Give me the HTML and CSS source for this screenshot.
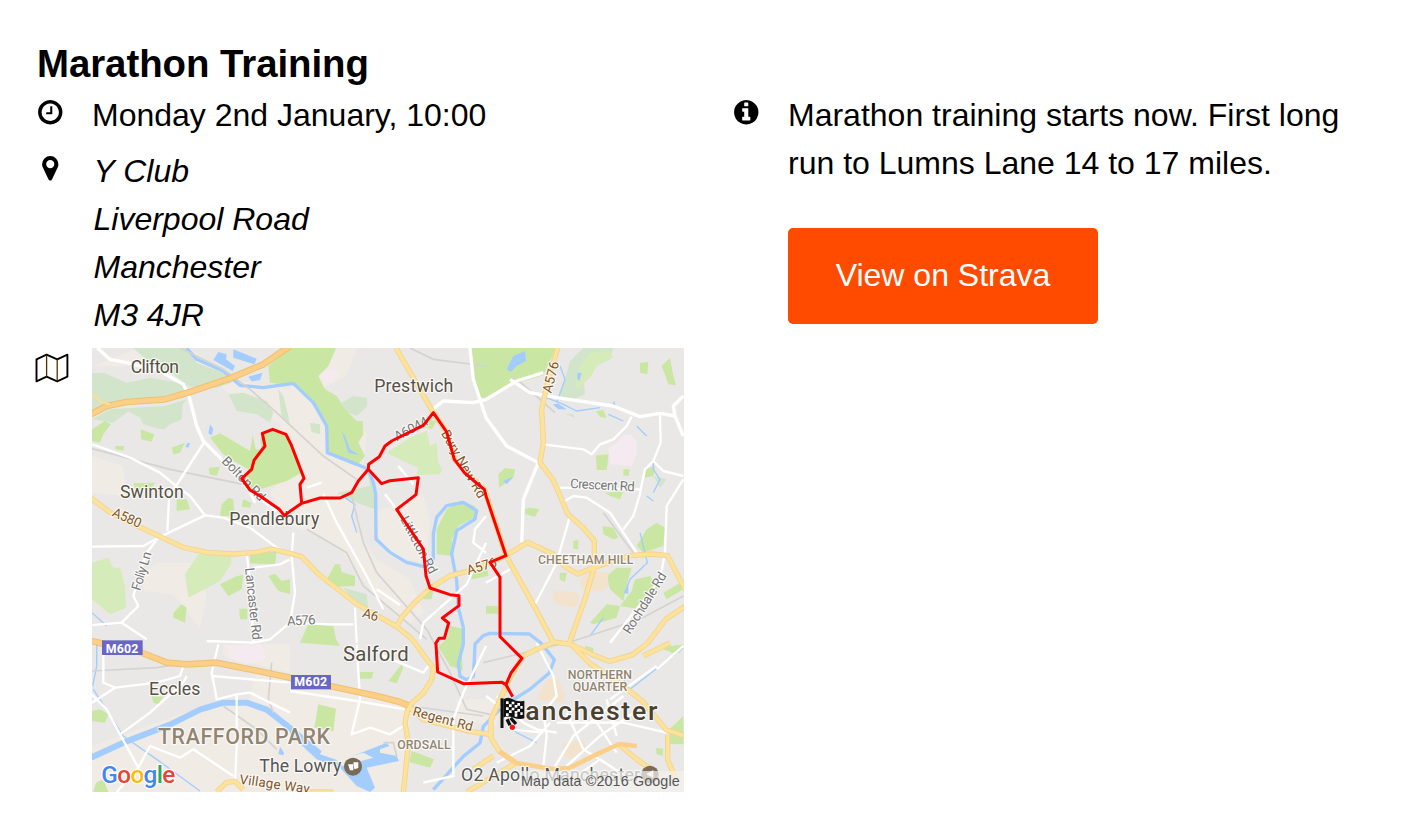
FILE: index.html
```html
<!DOCTYPE html>
<html lang="en">
<head>
<meta charset="utf-8">
<title>Marathon Training</title>
<link rel="stylesheet" href="styles.css">
</head>
<body>
<main class="event">
<h1 class="title">Marathon Training</h1>
<div class="columns">
<section class="col">
<div class="row">
<svg class="icon" viewBox="0 0 1792 1792"><path d="M1024 544v448q0 14-9 23t-23 9h-320q-14 0-23-9t-9-23v-64q0-14 9-23t23-9h224v-352q0-14 9-23t23-9h64q14 0 23 9t9 23zm416 352q0-148-73-273t-198-198-273-73-273 73-198 198-73 273 73 273 198 198 273 73 273-73 198-198 73-273zm224 0q0 209-103 385.5t-279.5 279.5-385.5 103-385.5-103-279.5-279.5-103-385.5 103-385.5 279.5-279.5 385.5-103 385.5 103 279.5 279.5 103 385.5z"/></svg>
<time class="when">Monday 2nd January, 10:00</time>
</div>
<div class="row row-place">
<svg class="icon" viewBox="0 0 1792 1792"><path d="M1152 640q0-106-75-181t-181-75-181 75-75 181 75 181 181 75 181-75 75-181zm256 0q0 109-33 179l-364 774q-16 33-47.5 52t-67.5 19-67.5-19-46.5-52l-365-774q-33-70-33-179 0-212 150-362t362-150 362 150 150 362z"/></svg>
<address class="address">Y Club<br>Liverpool Road<br>Manchester<br>M3 4JR</address>
</div>
<div class="row row-map">
<svg class="icon-map" viewBox="0 0 34 30"><path d="M1.5 6.3 11.6 1.7 22.2 6.3 32.4 1.7V23.7L22.2 28.3 11.6 23.7 1.5 28.3Z" fill="none" stroke="#000" stroke-width="1.9" stroke-linejoin="round"/><path d="M11.6 2V23.7M22.2 6.3V28" stroke="#5a2d00" stroke-width="1.3"/></svg>
<svg class="map" viewBox="6 6 1776 1332">
<rect class="land" x="0" y="0" width="1790" height="1350"/>
<!-- Pale suburban land -->
<g class="beige">
<path d="M6 60 150 6H300L420 100 600 130V6H800L770 90 690 130 740 220 830 260 820 370 780 520 860 640 960 700 1000 800 960 830 860 760 760 620 690 570 600 540 540 440 590 380 570 230 480 200 380 110 200 60Z"/>
<path d="M150 690 200 650 310 650 350 750 330 850 310 820 250 745 160 735Z"/>
<path d="M6 330 100 360 110 450 6 440Z"/>
<path d="M6 1200 200 1130 400 1060 480 1060 500 980 700 1010 960 1080 950 1338H6ZM400 895H600V980L400 930Z"/>
<path d="M850 500 1000 444 1020 520 1010 650 900 630 860 570ZM1100 1060 1230 1060 1220 1140 1100 1120Z"/>
</g>
<!-- Woodland and hills -->
<g class="pale">
<path d="M6 82 40 80 110 110 180 95 290 115 295 145 225 165 110 172 6 205ZM6 220 60 190 225 180 290 160 278 175 275 220 240 235 225 250 200 247 160 235 150 215 115 196 70 230 6 220ZM130 6H290L320 50 400 80 425 110 380 125 300 122 250 85 180 50Z"/>
<path d="M415 145 460 140 530 165 550 200 540 230 500 205 440 195ZM565 130 580 150 595 210 600 240 575 215Z"/>
<path d="M755 170 790 150 830 155 832 180 800 210 765 195ZM660 230 690 235 690 265 665 258ZM740 440 840 420 830 360 860 450 855 490 800 470Z"/>
<path d="M1440 45 1480 6 1570 6 1560 40 1510 60 1480 90 1485 145 1450 160 1405 150 1425 100ZM1425 205H1450L1455 215ZM760 725 830 745 835 790 800 780ZM1690 390 1730 400 1710 425Z"/>
</g>
<g class="green">
<path d="M540 110 535 60 600 6H738L715 60 685 90 705 130 740 150 765 190 800 225 818 225 820 265 805 290 825 330 805 355 735 330 712 310 710 240 670 170 620 120Z"/>
<path d="M360 275 390 262 430 285 480 315 488 268 497 310 515 312 510 280 525 262 550 252 590 266 625 340 635 380 590 405 510 430 480 425 462 395 475 370 440 350 400 325Z"/>
<path d="M152 250 193 265 185 287 153 280ZM6 250 45 225 62 235 40 265 30 290 6 285ZM245 305 285 290 270 320 250 325ZM75 300 102 300 100 314 78 310ZM357 365 390 362 380 390 358 385ZM130 412 195 410 180 430 135 430Z"/>
<path class="lime" d="M890 320 960 275 1010 255 1020 300 1040 290 1045 350 1056 370 1050 385 980 388 985 365 940 345ZM285 685 325 625 420 620 425 650 390 705 295 755ZM6 650 55 635 70 665 90 665 105 720 108 785 60 805 6 760ZM1470 60 1500 20 1560 15 1568 35 1520 60 1500 95 1455 135 1460 95Z"/>
<path d="M480 622 560 617 555 655 480 652ZM390 715 440 690 460 688 455 730 415 750ZM535 690 555 683 575 705 600 700V744L565 735ZM250 800 275 775 290 785 285 830 250 815ZM448 788 472 788 472 820 450 820ZM395 475 415 455 430 460 433 510 390 510ZM260 460 290 460 300 490 260 495ZM460 460 485 470 480 485 455 482Z"/>
<path d="M1040 550 1070 490 1110 465 1155 480 1160 510 1105 540 1085 580 1090 630 1040 625ZM705 710 735 655 750 655 755 678 795 690 795 720 720 722ZM1000 740 1030 732 1025 760 1000 760ZM655 835 730 840 738 880 750 900 630 890ZM1140 690 1190 640 1195 690 1145 700ZM1080 840 1125 850 1115 910 1118 975 1080 955 1045 905 1075 870Z"/>
<path d="M1142 6H1398L1360 88 1270 115 1188 160 1165 150 1148 100ZM970 230 1000 220 1040 225 1025 250ZM1650 50 1675 48 1672 85 1650 80ZM1715 60 1740 35 1750 90 1758 118 1735 115ZM1518 195 1540 192 1550 215 1530 213ZM1518 328 1556 325 1550 372 1520 372ZM1225 385 1245 366 1275 370 1270 395 1228 425ZM1665 370 1695 360 1690 390 1665 395ZM1600 370 1620 370 1615 390 1600 388Z"/>
<path d="M1305 488 1320 485 1348 490 1335 512 1307 505ZM1545 440 1600 435 1590 460 1560 450ZM1538 540 1570 545 1585 575 1570 580 1540 565ZM1640 600 1670 550 1700 530 1725 545 1720 600 1660 620ZM1450 585 1465 582 1465 610 1450 608ZM1410 680 1430 680 1425 708 1408 700ZM1550 690 1580 665 1625 665 1615 700 1600 765 1560 730ZM1590 780 1625 735 1635 700 1680 690 1705 725 1670 750 1650 790ZM1500 830 1550 775 1590 780 1580 815 1510 835ZM1720 740 1780 705 1780 730 1730 760ZM1188 780 1225 780 1225 803 1188 803Z"/>
<path d="M6 1095 30 1090 55 1105 45 1130 6 1125ZM185 1050 220 1052 205 1075 190 1070ZM18 1310 40 1300 55 1338H10ZM685 1075 738 1088 730 1155 673 1145ZM808 978 850 978 845 998 808 998ZM895 1005 935 955 940 965 920 1012ZM965 1215 1032 1240 1020 1265 958 1248ZM1045 895 1115 895 1100 940 1110 970 1080 960ZM1738 1150 1780 1110V1195H1740ZM1710 905 1780 895 1770 920 1745 920ZM1698 1205 1720 1208 1718 1230 1700 1225ZM1485 900 1510 905 1510 930 1488 925Z"/>
</g>
<path class="pink" d="M1555 305 1580 290 1600 268 1620 265 1640 285 1640 325 1625 360 1560 355ZM695 80 730 65 745 85 730 110 700 105ZM415 900 515 895 530 940 470 955 415 935Z"/>
<path class="tan" d="M1470 700 1500 675 1555 680 1553 720 1530 738 1475 730ZM1385 750 1395 732 1460 740 1470 755 1455 785 1400 775ZM1340 1060 1370 1000 1405 1000 1425 1050 1415 1070ZM1420 1190 1480 1180 1490 1210 1450 1240 1420 1230Z"/>
<!-- Water -->
<g class="water-fill">
<path d="M370 42 385 18 410 25 408 40 435 60 428 75ZM430 10 500 38 493 55 430 35ZM475 92 517 80 510 102 485 106ZM355 262 360 235 370 250 365 268ZM286 302 293 290 300 292 295 305ZM1250 70 1270 30 1305 15 1308 45 1280 60 1262 78ZM1462 80H1475L1468 105 1462 100ZM1566 178 1572 165 1578 180ZM1388 175 1405 173 1430 190 1405 190ZM1240 405 1270 392 1250 415ZM1602 740 1615 715V744ZM565 1225 570 1202 582 1220 580 1228Z"/>
<path d="M600 1145 695 1215 690 1225 750 1245 890 1190 898 1200 870 1210 870 1220 920 1230 927 1245 830 1265 855 1325 840 1338 800 1320 750 1265 680 1240 600 1165Z"/>
<path d="M755 255 765 270 780 310 808 328 775 320Z"/>
</g>
<g class="dock"><path d="M735 1245 820 1220 850 1235 760 1260ZM870 1275 910 1255 930 1270 910 1290 930 1300 880 1310Z"/></g>
<g class="river">
<path class="canal" d="M0 1236 110 1186 240 1136 330 1091 400 1070 470 1070 530 1091 600 1146 680 1215"/>
<path d="M290 6 320 40 400 75 450 118 520 125 610 112 670 170 710 240 712 320 800 355 835 370 850 410 857 444 858 579 900 619 950 649 1000 661 1030 639 1030 564 1040 514 1070 479 1120 469 1160 494 1155 519 1100 554 1085 624 1100 704 1105 784 1120 844 1120 895 1105 951 1110 991 1130 1001 1150 991 1153 941 1155 894 1180 869 1200 862 1318 864 1353 891 1393 941 1378 981 1318 1031 1238 1081 1180 1141 1170 1191 1120 1231 1030 1331"/>
<path class="brook" d="M765 455 795 475 785 510 800 560M1400 170 1425 100 1410 60M1370 155 1420 175 1460 195 1530 185M1555 205 1600 225M1640 240 1670 270M1650 560 1672 650 1620 700 1605 740M1540 815 1500 870M1690 345 1690 370 1710 400 1690 440M20 895V960L8 1020M10 1030 100 1170 200 1240 330 1335M1670 450 1690 465M1780 905 1620 1030 1600 1000M1255 1130 1280 1160 1340 1190M6 800 50 840"/>
</g>
<!-- Railways -->
<path class="rail" d="M6 308 240 370 460 415M270 6 400 70 480 130 560 200 700 330 800 400M960 6 1030 40 1188 60M650 550 720 590 770 620 820 720 940 820 1010 880M785 450 820 590 860 680 1010 850 1080 980 1130 1090 1200 1105M6 975 200 965 260 955M1270 90 1395 200M1540 500 1630 620M1780 750 1650 820 1450 885 1180 950M545 950 535 1060 550 1100M400 1080 500 1150 560 1210M960 1080 1180 1110M880 1190 910 1190 920 1230"/>
<!-- Local streets -->
<g class="streets">
<path class="wide" d="M22 6 60 40 110 50 210 75 280 115 297 150 320 240 340 285 400 345 480 432 560 495"/>
<path d="M6 295 120 335 210 380 258 420 300 450 345 508M345 285 258 420 238 444 232 555M6 602 160 600 205 575 345 508 400 515 480 545 560 605 600 625M205 575 170 620 150 680 130 750 145 780 95 830 0 838M95 830 170 880M470 625 480 700 490 890 350 885M490 665 570 655 600 640M490 890 540 880 600 830 615 740 605 630 610 560M600 830 720 835 790 835"/>
<path d="M6 1070 75 1025 200 1010 270 990 280 960M40 895 40 1010 75 1025M0 1040 50 1090 90 1165 145 1265 80 1338M90 1165 180 1100 280 1010 290 990M385 895 365 980 375 1030 380 1060 440 1045 440 1200 435 1310M440 1045 480 1040 600 1100M365 990 600 1010M145 1265 180 1200 270 1235 310 1210 430 1290M600 1035 800 1065 945 1090M800 895 810 1060 785 1165 840 1145 900 1165 940 1140M795 785 800 890M870 925 1000 980 1015 960"/>
<path d="M700 444 740 530 830 690 880 790M860 730 930 777M480 440 495 470M885 444 920 490M925 360 970 415M650 425 695 410M1188 590 1130 715 1000 830 990 880M1188 710 1260 670M1188 510 1155 550 1150 590 1188 620"/>
<path class="wide" d="M1028 190 1060 165 1150 170 1188 160 1280 105 1360 80M1140 6 1150 100 1188 215 1250 300 1345 350 1300 460 1295 590"/>
<path class="wide" d="M1260 100 1320 140 1400 155 1570 180 1650 212 1710 202 1755 210 1750 180 1780 150M1755 210 1780 270"/>
<path d="M1360 295 1480 310 1505 325 1530 295 1570 280 1610 240 1625 212M1710 205 1712 290 1690 345 1665 370 1650 440M1690 345 1720 375 1780 390M1780 400 1730 480 1725 620 1710 700 1560 890M1425 465 1450 450 1490 455 1560 500 1600 560 1640 620M1650 444 1630 510 1600 550M1440 510 1400 650 1335 775M1410 425 1650 430 1650 445"/>
<path d="M1340 891 1390 990 1400 1050 1360 1100 1370 1170 1360 1260M1220 1050 1300 1130 1340 1150 1400 1160M1188 1050 1240 1090 1260 1150 1360 1160M1400 1130 1600 1130 1730 1160M1430 1100 1480 1210 1560 1260M1500 1100 1580 1220M1600 1050 1450 1170 1390 1270M1660 1080 1530 1170 1430 1260M1550 1060 1580 1170M1220 1250 1320 1200 1380 1130M1460 1290 1530 1240 1620 1300M1188 900 1120 1040 1090 1120 1090 1290 1000 1310M1700 960 1560 1060M1780 900 1700 970"/>
</g>
<!-- A roads -->
<defs><path id="a-roads" d="M0 454 60 499 140 539 215 574 280 604 350 619 430 624 500 619 545 609 600 622 635 632 685 684 800 774 920 842 960 874 975 891 1000 926 1030 966 1025 1001 1000 1041 955 1081 945 1131 955 1191 945 1291 940 1338M920 842 935 814 970 774 1020 727 1080 689 1140 674 1200 650 1248 629 1313 589 1388 624 1428 664 1463 684 1508 666 1618 629 1688 624 1733 629 1758 679 1788 734M918 6 1030 200 1070 258 1093 340 1183 430 1188 444 1248 629 1318 754 1393 894M1403 6 1373 110 1355 190 1360 290 1350 350 1388 400 1408 444 1433 504 1478 544 1513 584 1513 664 1483 764 1438 891M1788 779 1728 819 1673 891 1628 926 1558 946 1508 926 1443 895 1393 888 1338 911 1298 931 1258 1000 1203 1121 1203 1176 1228 1216 1278 1251M1443 895 1498 951 1588 1011 1658 1066 1728 1151 1788 1171M955 1081 1000 1121 1140 1156 1203 1166M1278 1251 1130 1338M1733 1166 1733 1241 1758 1301M1588 1196 1640 1240 1700 1280M380 1338 410 1309 435 1306 460 1331M640 1338 730 1338M1210 1230 1150 1270M1660 930 1740 891"/></defs>
<use class="a-case" href="#a-roads"/>
<use class="a-road" href="#a-roads"/>
<!-- Motorways -->
<path class="mw-case" d="M-10 212 50 180 110 168 225 160 300 138 420 97 520 55 600 0M0 884 150 918 230 950 290 955 380 950 470 968 600 995 720 1020 860 1050 930 1068 955 1078"/>
<path class="mw" d="M-10 212 50 180 110 168 225 160 300 138 420 97 520 55 600 0M0 884 150 918 230 950 290 955 380 950 470 968 600 995 720 1020 860 1050 930 1068 955 1078M1228 1216 1278 1251 1388 1269 1438 1266 1518 1226 1588 1194 1640 1200"/>
<path class="thin-yellow" d="M6 142 30 165 60 175"/>
<!-- Road names -->
<g class="road">
<text transform="translate(393 347) rotate(46)" textLength="168">Bolton Rd</text>
<text transform="translate(921 286) rotate(-28)" textLength="110">A6044</text>
<text transform="translate(150 736) rotate(-73)" textLength="120">Folly Ln</text>
<text transform="translate(465 667) rotate(84)" textLength="217">Lancaster Rd</text>
<text transform="translate(930 519) rotate(62)" textLength="190">Littleton Rd</text>
<text transform="translate(1440 426) rotate(3)" textLength="194">Crescent Rd</text>
<text transform="translate(1620 867) rotate(-58)" textLength="210">Rochdale Rd</text>
<text transform="translate(592 839) rotate(-3)" textLength="85">A576</text>
</g>
<g class="road brown">
<text transform="translate(1384 143) rotate(-76)" textLength="96">A576</text>
<text transform="translate(64 509) rotate(24)" textLength="91">A580</text>
<text transform="translate(815 812) rotate(17)" textLength="48">A6</text>
<text transform="translate(1135 687) rotate(-17)" textLength="92">A576</text>
<text transform="translate(1052 262) rotate(60)" textLength="228">Bury New Rd</text>
<text transform="translate(966 1108) rotate(15)" textLength="185">Regent Rd</text>
<text transform="translate(447 1313) rotate(8)" textLength="212">Village Way</text>
</g>
<!-- Place names -->
<g class="place">
<text x="122" y="81" textLength="145">Clifton</text>
<text x="853" y="139" textLength="237">Prestwich</text>
<text x="90" y="457" textLength="191">Swinton</text>
<text x="418" y="538" textLength="270">Pendlebury</text>
<text x="177" y="1046" textLength="154">Eccles</text>
<text class="town" x="759" y="946" textLength="197">Salford</text>
<text class="city" x="1306" y="1122" textLength="396">anchester</text>
</g>
<g class="place poi"><text x="508" y="1277" textLength="246">The Lowry</text><text x="1113" y="1306" textLength="537">O2 Apollo Manchester</text></g>
<g class="district">
<text class="park" x="204" y="1193" textLength="516">TRAFFORD PARK</text>
<text x="1344" y="654" textLength="286">CHEETHAM HILL</text>
<text x="922" y="1209" textLength="160">ORDSALL</text>
<text x="1433" y="999" textLength="193">NORTHERN</text>
<text x="1448" y="1036" textLength="164">QUARTER</text>
</g>
<g><circle cx="789" cy="1262" r="27" fill="#7a6a58"/><path d="M774 1255h16v18h-10zM790 1249h15v17l-12 4z" fill="#fff"/><circle cx="1680" cy="1285" r="26" fill="#7a6a58"/><path d="m1668 1285 22-13v24z" fill="#fff"/></g>
<g class="shield"><rect x="36" y="883" width="122" height="44"/><text x="47" y="920" textLength="98">M602</text><rect x="603" y="987" width="120" height="43"/><text x="613" y="1021" textLength="98">M602</text></g>
<!-- Training route -->
<path class="route" d="M1268 1052 1248 1016 1236 1009 1120 1013 1043 978 1038 894 1037 892 1047 877 1063 877 1076 831 1057 816 1107 779 1107 749 1080 746 1020 726 1008 689 1000 609 920 490 978 446 985 395 900 404 875 413 835 370 836 355 868 332 885 300 905 285 1000 238 1030 200 1070 258 1093 340 1123 380 1170 420 1183 430 1188 450 1248 629 1200 649 1230 694 1230 872 1296 937 1263 981 1248 1016"/>
<path class="route" d="M835 370 805 405 785 440 750 456 690 456 635 472 600 496 583 509 568 490 510 450 480 432 455 398 485 370 492 343 525 300 517 262 548 250 588 265 603 295 642 397 630 415 635 472"/>
<circle cx="1267" cy="1144" r="8" fill="#f11"/>
<!-- Finish flag -->
<path d="M1236 1057V1146" stroke="#111" stroke-width="9"/><path d="M1240 1060q14-9 28 0t35 4v53q-14 5-33-2t-30 0z" fill="#111"/>
<path d="M1248 1070h8m9 1h8m9 4h8M1257 1079h8m9 2h8m9 3h7M1248 1088h8m9 1h8m9 4h8M1257 1097h8m9 2h8m9 4h7M1274 1108h8M1248 1106h8" stroke="#fff" stroke-width="8"/>
<path d="M1251 1120 1260 1138M1262 1116 1278 1134" stroke="#111" stroke-width="10"/>
<!-- Attribution -->
<rect x="1290" y="1275" width="492" height="63" fill="#f2f1ef" opacity=".72"/>
<text class="credit" x="1293" y="1320" textLength="476">Map data ©2016 Google</text>
<text class="google" x="34" y="1311" textLength="222"><tspan fill="#4285f4">G</tspan><tspan fill="#ea4335">o</tspan><tspan fill="#fbbc05">o</tspan><tspan fill="#4285f4">g</tspan><tspan fill="#34a853">l</tspan><tspan fill="#ea4335">e</tspan></text>
</svg>
</div>
</section>
<section class="col">
<div class="row">
<svg class="icon" viewBox="0 0 1792 1792"><path d="M1152 1376v-160q0-14-9-23t-23-9h-96v-512q0-14-9-23t-23-9h-320q-14 0-23 9t-9 23v160q0 14 9 23t23 9h96v320h-96q-14 0-23 9t-9 23v160q0 14 9 23t23 9h448q14 0 23-9t9-23zm-128-896v-160q0-14-9-23t-23-9h-192q-14 0-23 9t-9 23v160q0 14 9 23t23 9h192q14 0 23-9t9-23zm640 416q0 209-103 385.5t-279.5 279.5-385.5 103-385.5-103-279.5-279.5-103-385.5 103-385.5 279.5-279.5 385.5-103 385.5 103 279.5 279.5 103 385.5z"/></svg>
<div class="details">
<p class="description">Marathon training starts now. First long<br>run to Lumns Lane 14 to 17 miles.</p>
<a class="button" href="#">View on Strava</a>
</div>
</div>
</section>
</div>
</main>
</body>
</html>
```
FILE: styles.css
```css
* { box-sizing: border-box; }
body { margin: 0; background: #fff; color: #000; font: 32px/48px "Liberation Sans", Arial, sans-serif; overflow: hidden; }
.event { padding: 37px 36px 0; }
.title { margin: 0; padding-left: 1px; font-size: 38.4px; line-height: 54px; font-weight: 700; white-space: nowrap; letter-spacing: -.05px; }
.columns { display: grid; grid-template-columns: 648px 1fr; column-gap: 48px; }
.row { display: grid; grid-template-columns: 56px 1fr; align-items: start; white-space: nowrap; }
.row-place { margin-top: 8px; }
.row-map { margin-top: 9px; }
.icon { width: 28.5px; height: 28.5px; margin-top: 7px; }
.icon-map { width: 34px; height: 30px; margin: 5px 0 0 -1px; }
.address { padding-left: 1.5px; font-style: italic; }
.description { margin: 0 0 41px; }
.button { display: inline-block; width: 310px; height: 96px; border-radius: 5px; background: #ff4b00; color: #fff; line-height: 94px; text-align: center; text-decoration: none; }
.map { display: block; width: 592px; height: 444px; overflow: hidden; font-family: Roboto, sans-serif; }
.land { fill: #e9e8e6; }
.beige { fill: #f0ebe5; }
.pale { fill: #d2e5ca; }
.green { fill: #cae6a3; }
.lime { fill: #d5ebb9; }
.pink { fill: #f5eaef; }
.tan { fill: #f3e3cc; }
.water-fill { fill: #a3ccff; }
.dock { fill: #f0ebe5; }
.river { fill: none; stroke: #a3ccff; stroke-width: 10; stroke-linejoin: round; }
.canal { stroke-width: 18; }
.brook { stroke-width: 4; }
.rail { fill: none; stroke: #d4d3d1; stroke-width: 5; }
.streets { fill: none; stroke: #fff; stroke-width: 7; stroke-linejoin: round; }
.wide { stroke-width: 10; }
.a-case, .a-road { fill: none; stroke: #f1d38f; stroke-width: 16; stroke-linejoin: round; }
.a-road { stroke: #fde29b; stroke-width: 11; }
.mw-case, .mw { fill: none; stroke: #efc070; stroke-width: 20; stroke-linejoin: round; }
.mw { stroke: #fbcf88; stroke-width: 14; }
.thin-yellow { fill: none; stroke: #fbdf96; stroke-width: 6; }
.route { fill: none; stroke: #fe0000; stroke-width: 9; stroke-linejoin: round; }
.road, .place, .district { paint-order: stroke; stroke: #fff; stroke-opacity: .75; stroke-width: 7; stroke-linejoin: round; }
.road { font-size: 40px; fill: #777; }
.brown { fill: #815528; }
.place { font-size: 53px; fill: #575044; }
.town { font-size: 61px; }
.city { font-size: 80px; font-weight: 500; fill: #4a4030; }
.poi { fill: #555; }
.district { font-size: 37px; font-weight: 500; fill: #918571; }
.park { font-size: 64px; }
.shield { font-size: 37px; font-weight: 700; fill: #fff; }
.shield rect { fill: #6967c6; }
.credit { font: 43px "Liberation Sans", sans-serif; fill: #555; }
.google { font: 500 73px Roboto, sans-serif; paint-order: stroke; stroke: #fff; stroke-width: 7; }
```
